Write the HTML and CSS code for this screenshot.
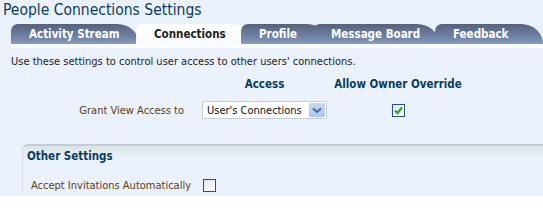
FILE: index.html
```html
<!DOCTYPE html>
<html lang="en">
<head>
    <meta charset="UTF-8">
    <title>People Connections Settings</title>
    <link rel="stylesheet" href="styles.css">
</head>
<body>

    <div class="page">
        <h1>People Connections Settings</h1>

        <!-- Tabs -->
        <nav class="tabs">
            <div class="tab tab-activity">Activity Stream</div>
            <div class="tab tab-connections active">Connections</div>
            <div class="tab tab-profile">Profile</div>
            <div class="tab tab-board">Message Board</div>
            <div class="tab tab-feedback">Feedback</div>
        </nav>

        <div class="content">
            <p class="intro">Use these settings to control user access to other users' connections.</p>

            <div class="access-grid">
                <div></div>
                <div class="col-head">Access</div>
                <div class="col-head">Allow Owner Override</div>

                <div class="label">Grant View Access to</div>
                <div class="select">
                    <span class="select-text">User's Connections</span>
                    <span class="select-btn">
                        <svg width="10" height="7" viewBox="0 0 10 7"><path d="M1 1.5 L5 5 L9 1.5" fill="none" stroke="#4a6a9e" stroke-width="2"/></svg>
                    </span>
                </div>
                <div class="check-cell">
                    <span class="checkbox">
                        <svg width="11" height="11" viewBox="0 0 11 11"><path d="M2 5.5 L4.5 8 L9 2.5" fill="none" stroke="#2f9e34" stroke-width="2.2"/></svg>
                    </span>
                </div>
            </div>

            <!-- Other Settings -->
            <section class="other">
                <h2>Other Settings</h2>
                <div class="other-row">
                    <span class="label">Accept Invitations Automatically</span>
                    <span class="checkbox empty"></span>
                </div>
            </section>
        </div>
    </div>

</body>
</html>
```

FILE: styles.css
```css
/* General Styles */
* {
    margin: 0;
    padding: 0;
    box-sizing: border-box;
}

body {
    font-family: "DejaVu Sans", sans-serif;
    font-stretch: condensed;
    background-color: #fff;
    color: #222;
    font-size: 11px;
}

.page {
    background-color: #eaf1fb;
    height: 196px;
}

h1 {
    font-size: 15.5px;
    font-weight: normal;
    color: #0b3d5c;
    padding: 1px 3px 0;
    height: 24px;
}

/* Tabs */
.tabs {
    display: flex;
    padding-left: 11px;
    height: 20px;
}

.tab {
    height: 20px;
    line-height: 21px;
    padding-left: 18px;
    font-weight: bold;
    font-size: 11.5px;
    color: #fff;
    white-space: nowrap;
    background: linear-gradient(#56627c, #7488ab 75%, #8a9ec1);
    border-radius: 7px 22px 0 0 / 7px 20px 0 0;
}

.tab.active {
    background: linear-gradient(#fff, #f6f9fd);
    color: #222;
}

.tab-activity { width: 128px; }
.tab-connections { width: 117px; margin-left: -3px; }
.tab-profile { width: 88px; margin-left: -12px; }
.tab-board { width: 126px; margin-left: -16px; }
.tab-feedback { width: 108px; margin-left: -4px; }

/* Content */
.content {
    margin-left: 11px;
    border-top: 4px solid #f8fbff;
}

.intro {
    padding: 7px 0 0;
    height: 25px;
}

.access-grid {
    display: grid;
    grid-template-columns: 191px 125px 142px;
    grid-template-rows: 22px 30px;
    align-items: center;
}

.col-head {
    font-weight: bold;
    color: #0b3d5c;
    font-size: 11.5px;
    text-align: center;
    white-space: nowrap;
}

.label {
    color: #5b4020;
}

.access-grid .label {
    text-align: right;
    padding-right: 18px;
}

.select {
    width: 125px;
    height: 18px;
    display: flex;
    align-items: center;
    justify-content: space-between;
    background-color: #fff;
    border: 1px solid #c7ccd6;
    padding: 0 1px 0 4px;
}

.select-text {
    color: #111;
}

.select-btn {
    width: 16px;
    height: 14px;
    display: flex;
    align-items: center;
    justify-content: center;
    background: linear-gradient(#c7d8f5, #aec6ee);
}

.check-cell {
    text-align: center;
    line-height: 0;
}

.checkbox {
    display: inline-block;
    width: 13px;
    height: 13px;
    border: 1px solid #23538a;
    background: linear-gradient(135deg, #e4e4df, #fff);
    line-height: 0;
}

/* Other Settings */
.other {
    margin-top: 19px;
    margin-left: 11px;
    border-top: 2px solid #c6cbdb;
    border-left: 1px solid #d6dbe8;
    border-top-left-radius: 6px;
    background: linear-gradient(#dae5e8, #eaf1fb 13px);
    padding-left: 4px;
}

.other h2 {
    font-size: 11.5px;
    color: #0b3d5c;
    padding-top: 3px;
    height: 33px;
}

.other-row {
    display: flex;
    align-items: center;
    padding-left: 4px;
}

.other-row .label {
    width: 172px;
}
```
